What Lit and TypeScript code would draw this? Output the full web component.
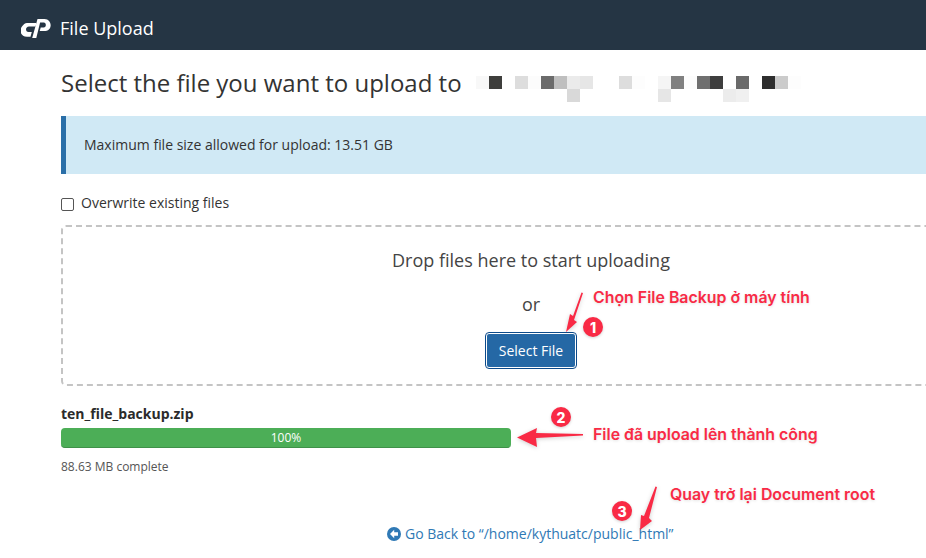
import { LitElement, html, css, svg } from "lit";
import { customElement } from "lit/decorators.js";

const row1: Record<number, string> = {0:"#f8f8f8",1:"#3e3e3c",3:"#dddddd",4:"#fcfcfc",5:"#6b6b6b",6:"#bfbfbf",7:"#ebebeb",8:"#e6e6e6",11:"#dddddd",12:"#fdfdfd",14:"#f5f5f5",15:"#808080",16:"#fcfcfc",17:"#6f6f6f",18:"#3e3e3e",20:"#6a6a6a",22:"#2e2e2e",23:"#cbcbcb",24:"#fdfdfd"};
const row2: Record<number, string> = {7:"#d9d9d9",14:"#e6e6e6",19:"#ececec",20:"#f0f0f0"};

@customElement("app-root")
export class AppRoot extends LitElement {
  static styles = css`
    :host { display: block; width: 926px; height: 558px; position: relative; overflow: hidden; background: #fff; font-family: "Open Sans", sans-serif; color: #333; }
    header { height: 50px; background: #253544; display: flex; align-items: center; gap: 9px; padding: 6px 0 0 21px; box-sizing: border-box; color: #fff; font-size: 18px; }
    header svg { display: block; margin-top: 1px; }
    main { padding-left: 61px; width: 1000px; box-sizing: border-box; }
    .title { height: 66px; display: flex; align-items: center; gap: 15px; font-size: 24px; color: #333; white-space: nowrap; padding-bottom: 2px; box-sizing: border-box; }
    .pix { display: grid; grid-template-columns: repeat(25, 13px); grid-auto-rows: 13px; margin: 13px 0 0 -1px; }
    .info { height: 58px; background: #d0e9f5; border-left: 5px solid #2a6fa8; box-sizing: border-box; display: flex; align-items: center; padding: 0 0 2px 18px; font-size: 14px; }
    .check { display: flex; align-items: center; gap: 7px; margin-top: 19px; height: 19px; font-size: 14px; }
    .box { width: 13px; height: 13px; border: 1px solid #555; border-radius: 2px; box-sizing: border-box; margin-top: 3px; }
    .drop { margin-top: 13px; height: 161px; width: 940px; border: 2px dashed #c4c4c4; border-radius: 5px; box-sizing: border-box; display: flex; flex-direction: column; align-items: center; font-size: 18px; color: #444; }
    .drop-t { margin-top: 20px; line-height: 26px; }
    .or { margin-top: 18px; line-height: 26px; }
    .btn { margin-top: 16px; width: 90px; height: 35px; box-sizing: border-box; background: #2568a5; border: 1px solid #fff; outline: 1px solid #0c4a8a; border-radius: 3px; color: #fff; font-size: 14px; display: flex; align-items: center; justify-content: center; }
    .fname { margin-top: 18px; font-size: 14px; font-weight: 700; line-height: 19px; color: #2b2b2b; }
    .bar { margin-top: 5px; width: 450px; height: 20px; background: #4cae57; border-bottom: 1px solid #3f9149; box-sizing: border-box; border-radius: 4px; color: #fff; font-size: 12px; display: flex; align-items: center; justify-content: center; }
    .size { margin-top: 10px; font-size: 12px; line-height: 17px; color: #555; }
    .back { margin-top: 49px; width: 940px; margin-left: -61px; padding-left: 387px; box-sizing: border-box; display: flex; align-items: center; gap: 4px; font-size: 14px; color: #2f79b5; line-height: 19px; }
    .note { position: absolute; font-family: Inter, sans-serif; font-weight: 600; font-size: 15.9px; line-height: 18px; color: #f92a45; white-space: nowrap; text-shadow: 0 1px 3px rgba(0,0,0,.12); }
    .num { position: absolute; width: 20px; height: 20px; border-radius: 50%; background: #f92a45; color: #fff; font-family: Inter, sans-serif; font-weight: 800; font-size: 14px; display: flex; align-items: center; justify-content: center; box-shadow: 0 1px 3px rgba(0,0,0,.18); }
    .overlay { position: absolute; left: 0; top: 0; pointer-events: none; filter: drop-shadow(0 1px 2px rgba(0,0,0,.2)); }
  `;

  private cells(data: Record<number, string>) {
    return Array.from({ length: 25 }, (_, i) =>
      html`<span style="background:${data[i] ?? "transparent"}"></span>`);
  }

  render() {
    return html`
      <header>
        <svg width="30" height="19" viewBox="0 0 30 19" aria-hidden="true">
          <path fill="#fff" d="M6 4h9.500l-1 3.600H8C4.500 7.600 3.800 12.600 7.500 13h3.300l-1.300 4.800H6C-.5 17.500-2 11.500 1 7.500 2.300 5.600 4 4 6 4Z"/>
          <path fill="#fff" d="M16.500 0h7c6 .2 7.800 6.800 4.600 10.200-1.400 1.400-3 1.900-5.300 1.900h-4.100l1-3.600h3c2.800-.1 2.800-4.700.1-4.900h-3.700L15.300 19h-4.100L16.500 0Z"/>
        </svg>
        <span>File Upload</span>
      </header>
      <main>
        <div class="title">
          <span>Select the file you want to upload to</span>
          <div class="pix">${this.cells(row1)}${this.cells(row2)}</div>
        </div>
        <div class="info">Maximum file size allowed for upload: 13.51 GB</div>
        <div class="check"><span class="box"></span><span>Overwrite existing files</span></div>
        <div class="drop">
          <div class="drop-t">Drop files here to start uploading</div>
          <div class="or">or</div>
          <div class="btn">Select File</div>
        </div>
        <div class="fname">ten_file_backup.zip</div>
        <div class="bar">100%</div>
        <div class="size">88.63 MB complete</div>
        <div class="back">
          <svg width="14" height="14" viewBox="0 0 14 14" aria-hidden="true">
            <circle cx="7" cy="7" r="7" fill="#2f79b5"/>
            <path fill="#fff" d="M7.200 2.800 3 7l4.200 4.200V8.800h3.800V5.200H7.200Z"/>
          </svg>
          <span>Go Back to “/home/kythuatc/public_html”</span>
        </div>
      </main>
      <svg class="overlay" width="926" height="558" viewBox="0 0 926 558" aria-hidden="true">
        ${svg`
          <path fill="#f92a45" d="M583 293 574 320 577 322 566 332 570 314 573 316 581.500 292.500Z"/>
          <path fill="#f92a45" d="M583 435.500 536 438 537 447 517 437.500 537 428 536 433 583 434Z"/>
          <path fill="#f92a45" d="M657 487 649 518 652 521 640 530 641 515 644 516 655.500 486.500Z"/>
        `}
      </svg>
      <div class="note" style="left:593px;top:289px">Chọn File Backup ở máy tính</div>
      <div class="note" style="left:593px;top:426px">File đã upload lên thành công</div>
      <div class="note" style="left:670px;top:486px">Quay trở lại Document root</div>
      <div class="num" style="left:583px;top:317px">1</div>
      <div class="num" style="left:551px;top:407px">2</div>
      <div class="num" style="left:612px;top:501px">3</div>
    `;
  }
}
